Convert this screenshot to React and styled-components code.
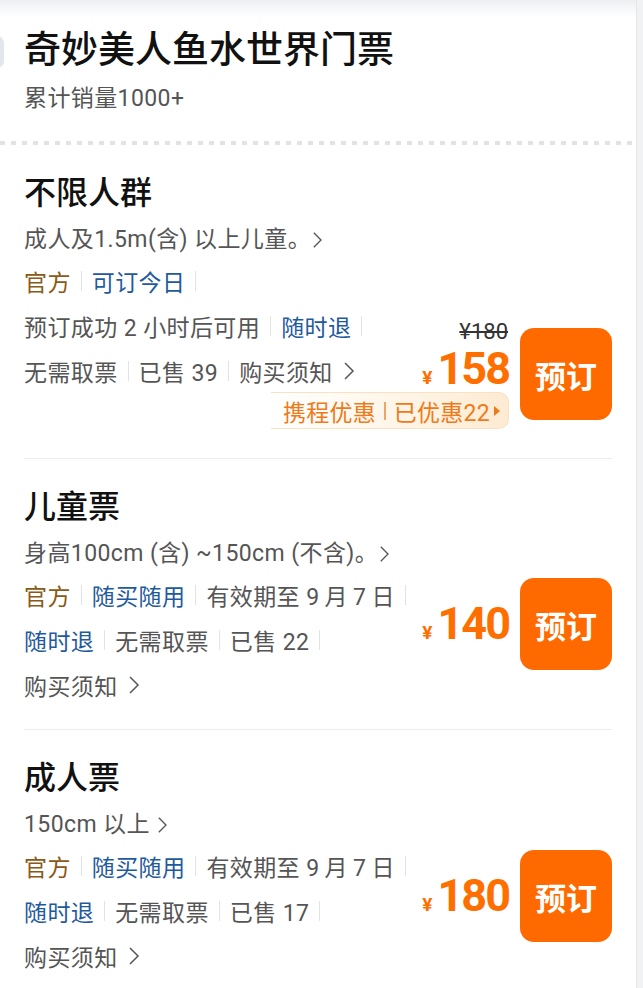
import React from 'react';
import styled, { createGlobalStyle } from 'styled-components';

const GlobalStyle = createGlobalStyle`
  body {
    margin: 0;
    background: #f1f2f4;
    font-family: Roboto, "Noto Sans CJK SC", sans-serif;
  }
`;

const Card = styled.div`
  margin-right: 6px;
  padding: 0 24px;
  min-height: 988px;
  box-sizing: border-box;
  background: linear-gradient(to bottom, #eceef1 0, #f8f9fa 10px, #fff 18px);
  border-right: 1px solid #e4e6e9;
  overflow: hidden;
`;

const Header = styled.div`
  padding-top: 29px;
`;

const TitleRow = styled.div`
  position: relative;
`;

const EdgeTab = styled.div`
  position: absolute;
  left: -36px;
  top: 7px;
  width: 16px;
  height: 32px;
  border-radius: 7px;
  background: #e2e7ee;
`;

const Title = styled.h1`
  margin: 0;
  font-size: 37px;
  line-height: 44px;
  font-weight: 500;
  color: #111;
`;

const Sales = styled.div`
  margin-top: 11px;
  font-size: 23px;
  line-height: 30px;
  letter-spacing: 0.4px;
  color: #555;
`;

const Dotted = styled.div`
  margin: 27px -24px 0;
  height: 4px;
  background: linear-gradient(to right, #e2e3e6 0 5px, transparent 5px 11px);
  background-size: 11px 4px;
`;

const Ticket = styled.div`
  padding: 28px 0 29px;
  border-bottom: ${p => (p.last ? 'none' : '1px solid #ececec')};
`;

const TicketName = styled.div`
  font-size: 32px;
  line-height: 40px;
  font-weight: 500;
  color: #111;
`;

const Desc = styled.div`
  margin-top: 12px;
  display: flex;
  align-items: center;
  font-size: 23px;
  line-height: 30px;
  letter-spacing: 0.4px;
  color: #555;
  white-space: pre;
`;

const Body = styled.div`
  margin-top: 11px;
  display: flex;
  align-items: flex-start;
`;

const Rows = styled.div`
  flex: 1 1 0;
  min-width: 0;
  display: flex;
  flex-direction: column;
  gap: 15px;
`;

const Row = styled.div`
  display: flex;
  align-items: center;
  height: 30px;
  font-size: 23px;
  letter-spacing: 0.4px;
  color: #555;
  white-space: pre;

  & > * {
    flex: none;
  }
`;

const Tag = styled.span`
  color: ${p => p.color || '#555'};
`;

const Sep = styled.span`
  display: inline-block;
  width: 1px;
  height: 20px;
  margin: 0 10px;
  background: #e3e3e3;
`;

const Side = styled.div`
  flex: none;
  display: flex;
  align-items: center;
  margin-top: ${p => p.offset}px;
`;

const PriceCol = styled.div`
  display: flex;
  flex-direction: column;
  align-items: flex-end;
`;

const OrigPrice = styled.div`
  font-size: 22px;
  line-height: 26px;
  color: #333;
  text-decoration: line-through;
  margin-right: 1px;
`;

const Price = styled.div`
  display: flex;
  align-items: baseline;
  color: #ff6f00;
  font-weight: 700;
  margin-top: ${p => (p.tight ? 0 : 2)}px;
`;

const Yen = styled.span`
  font-size: 19px;
  margin-right: 5px;
`;

const Amount = styled.span`
  font-size: 45px;
  line-height: 44px;
  letter-spacing: -2px;
`;

const Promo = styled.div`
  margin-top: 1px;
  height: 35px;
  display: flex;
  align-items: center;
  padding: 0 7px 0 12px;
  border: 1px solid #f8e2c2;
  border-left: none;
  border-radius: 0 10px 10px 0;
  background: linear-gradient(90deg, rgba(255, 255, 255, 0) 0%, #fff7ec 45%, #fdebd2 100%);
  font-size: 23px;
  letter-spacing: 0.3px;
  color: #ef7a19;
  white-space: pre;
`;

const PromoSep = styled.span`
  display: inline-block;
  width: 1.5px;
  height: 18px;
  margin: 0 8px;
  background: #f2a466;
`;

const BookButton = styled.button`
  margin-left: 11px;
  width: 92px;
  height: 92px;
  border: none;
  border-radius: 14px;
  background: #ff6a00;
  color: #fff;
  font-family: inherit;
  font-size: 31px;
  font-weight: 700;
  padding: 0;
  cursor: pointer;
`;

const Chevron = ({ size = 14, gap = 2 }) => (
  <svg
    width={size * 0.6}
    height={size}
    viewBox="0 0 6 10"
    style={{ marginLeft: gap, flex: 'none' }}
    fill="none"
    stroke="#555"
    strokeWidth="0.75"
  >
    <path d="M1 1 L5 5 L1 9" />
  </svg>
);

const Triangle = () => (
  <svg width="8" height="12" viewBox="0 0 8 12" style={{ marginLeft: 3 }}>
    <path d="M1 1 L7 6 L1 11 Z" fill="#ef7a19" />
  </svg>
);

const BROWN = '#8a5a16';
const BLUE = '#1f5a9e';
const VALID = '有效期至 9\u2009月\u20097\u2009日';

const tickets = [
  {
    name: '不限人群',
    desc: '成人及1.5m(含) 以上儿童。',
    offset: 53,
    orig: '¥180',
    price: '158',
    promo: true,
    rows: [
      [
        { t: '官方', c: BROWN },
        { t: '可订今日', c: BLUE, sep: true },
      ],
      [
        { t: '预订成功 2 小时后可用' },
        { t: '随时退', c: BLUE, sep: true },
      ],
      [{ t: '无需取票' }, { t: '已售 39' }, { t: '购买须知', chevron: true }],
    ],
  },
  {
    name: '儿童票',
    desc: '身高100cm (含) ~150cm (不含)。',
    offset: -2,
    price: '140',
    rows: [
      [
        { t: '官方', c: BROWN },
        { t: '随买随用', c: BLUE },
        { t: VALID, sep: true },
      ],
      [{ t: '随时退', c: BLUE }, { t: '无需取票' }, { t: '已售 22', sep: true }],
      [{ t: '购买须知', chevron: true }],
    ],
  },
  {
    name: '成人票',
    desc: '150cm 以上 ',
    offset: -1,
    price: '180',
    rows: [
      [
        { t: '官方', c: BROWN },
        { t: '随买随用', c: BLUE },
        { t: VALID, sep: true },
      ],
      [{ t: '随时退', c: BLUE }, { t: '无需取票' }, { t: '已售 17', sep: true }],
      [{ t: '购买须知', chevron: true }],
    ],
  },
];

function TicketRow({ items }) {
  return (
    <Row>
      {items.map((it, i) => (
        <React.Fragment key={i}>
          {i > 0 && <Sep />}
          <Tag color={it.c}>{it.t}</Tag>
          {it.chevron && <Chevron size={20} gap={10} />}
          {it.sep && <Sep />}
        </React.Fragment>
      ))}
    </Row>
  );
}

export default function App() {
  return (
    <>
      <GlobalStyle />
      <Card>
        <Header>
          <TitleRow>
            <EdgeTab />
            <Title>奇妙美人鱼水世界门票</Title>
          </TitleRow>
          <Sales>累计销量1000+</Sales>
        </Header>
        <Dotted />
        {tickets.map((tk, idx) => (
          <Ticket key={tk.name} last={idx === tickets.length - 1}>
            <TicketName>{tk.name}</TicketName>
            <Desc>
              {tk.desc}
              <Chevron size={18} gap={1} />
            </Desc>
            <Body>
              <Rows>
                {tk.rows.map((r, i) => (
                  <TicketRow key={i} items={r} />
                ))}
              </Rows>
              <Side offset={tk.offset}>
                <PriceCol>
                  {tk.orig && <OrigPrice>{tk.orig}</OrigPrice>}
                  <Price tight={!tk.orig}>
                    <Yen>¥</Yen>
                    <Amount>{tk.price}</Amount>
                  </Price>
                  {tk.promo && (
                    <Promo>
                      携程优惠
                      <PromoSep />
                      已优惠22
                      <Triangle />
                    </Promo>
                  )}
                </PriceCol>
                <BookButton>预订</BookButton>
              </Side>
            </Body>
          </Ticket>
        ))}
      </Card>
    </>
  );
}
